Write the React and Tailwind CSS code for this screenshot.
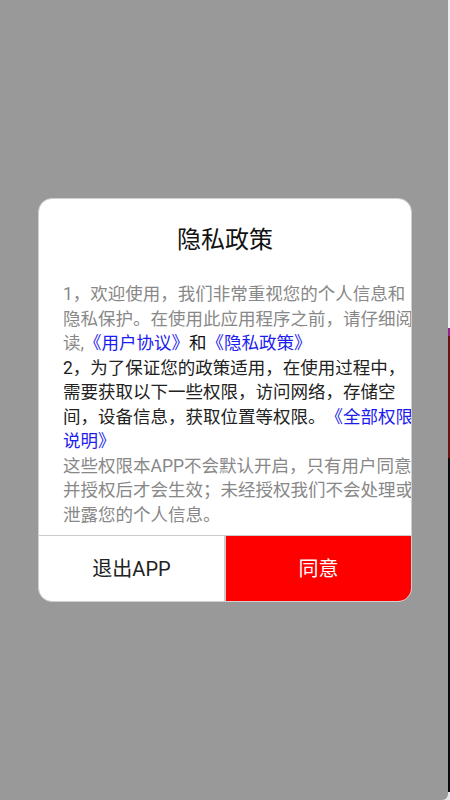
import React from "react";

export default function App() {
  const font = { fontFamily: 'Roboto, "Noto Sans CJK SC", sans-serif' };
  return (
    <div className="flex w-[450px] h-[800px] bg-[#e6e6e6] overflow-hidden" style={font}>
      <div className="w-[448px] h-full bg-[#999999] rounded-br-[6px] pt-[198px] pl-[38px]">
        <div className="w-[374px] h-[404px] bg-white rounded-[14px] border border-[#cfcfcf] overflow-hidden flex flex-col">
          <div className="pt-[24px] text-center text-[24px] leading-[34px] text-[#111111]">隐私政策</div>
          <div className="mt-[25px] flex-1 overflow-hidden pl-[24px]">
            <div className="w-[353px] text-[17.5px] leading-[24.5px] [text-spacing-trim:space-all]">
              <p className="text-[#888888]">
                1，欢迎使用，我们非常重视您的个人信息和隐私保护。在使用此应用程序之前，请仔细阅读,
                <span className="text-[#1c1cee]">《用户协议》</span>
                <span className="text-[#111111]">和</span>
                <span className="text-[#1c1cee]">《隐私政策》</span>
              </p>
              <p className="text-[#222222]">
                2，为了保证您的政策适用，在使用过程中，需要获取以下一些权限，访问网络，存储空间，设备信息，获取位置等权限。
                <span className="text-[#1c1cee]">《全部权限说明》</span>
              </p>
              <p className="text-[#888888]">
                这些权限本APP不会默认开启，只有用户同意并授权后才会生效；未经授权我们不会处理或泄露您的个人信息。
              </p>
            </div>
          </div>
          <div className="h-[66px] border-t border-[#cccccc] flex">
            <div className="w-[187px] flex items-center justify-center text-[20px] text-[#222222] border-r-2 border-[#cccccc]">
              退出APP
            </div>
            <div className="flex-1 flex items-center justify-center text-[20px] text-white bg-[#ff0000]">
              同意
            </div>
          </div>
        </div>
      </div>
      <div className="w-[2px] h-full flex flex-col">
        <div className="h-[328px] bg-[#eeeeee]" />
        <div className="h-[8px] bg-[#9a1f8f]" />
        <div className="h-[122px] bg-[#6e1010]" />
        <div className="h-[334px] bg-[#0a0a0a]" />
        <div className="flex-1 bg-[#e6e6e6]" />
      </div>
    </div>
  );
}
